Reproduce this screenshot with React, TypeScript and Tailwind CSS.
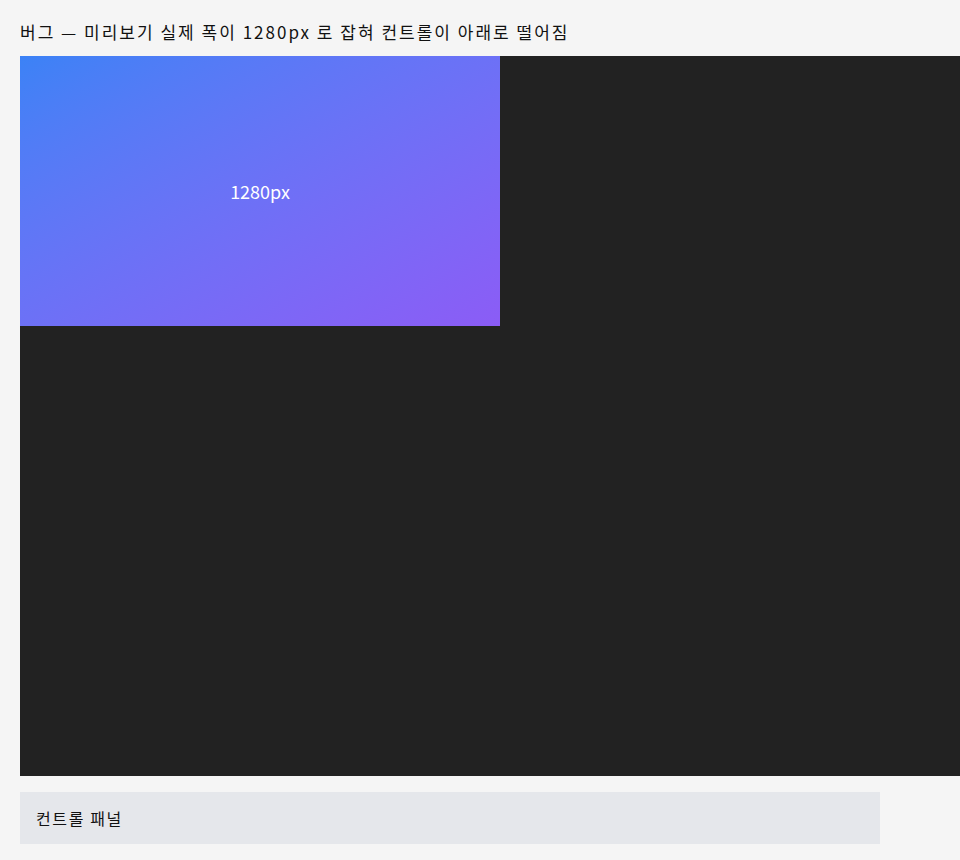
export default function App() {
  return (
    <main
      className="min-h-screen overflow-hidden bg-[#f5f5f5] p-5 text-[#111]"
      style={{ fontFamily: '"Noto Sans CJK KR", sans-serif' }}
    >
      <h1 className="mb-3 text-[17px] leading-6 font-normal tracking-[2px]">
        버그 — 미리보기 실제 폭이 1280px 로 잡혀 컨트롤이 아래로 떨어짐
      </h1>

      {/* 미리보기와 컨트롤이 한 줄에 있어야 하지만 폭 때문에 줄바꿈됨 */}
      <div className="flex flex-wrap gap-4">
        <div className="h-[720px] w-[1280px] shrink-0 bg-[#222222]">
          <div className="flex h-[270px] w-[480px] items-center justify-center bg-gradient-to-br from-[#3b82f6] to-[#8b5cf6] text-[18px] text-white">
            1280px
          </div>
        </div>

        <div className="w-[860px] bg-[#e5e7eb] px-4 py-3.5 text-base leading-6 tracking-[1.6px]">
          컨트롤 패널
        </div>
      </div>
    </main>
  );
}
